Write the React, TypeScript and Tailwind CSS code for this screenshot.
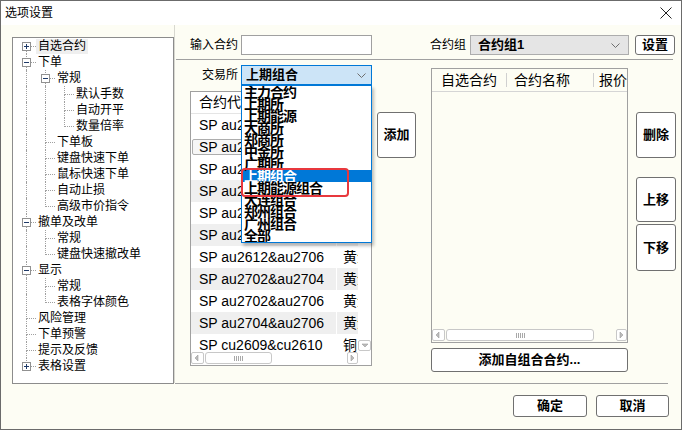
import React from 'react';

type Node = { label: string; children?: Node[]; collapsed?: boolean; selected?: boolean };

const tree: Node[] = [
  { label: '自选合约', collapsed: true, selected: true },
  {
    label: '下单',
    children: [
      { label: '常规', children: [{ label: '默认手数' }, { label: '自动开平' }, { label: '数量倍率' }] },
      { label: '下单板' },
      { label: '键盘快速下单' },
      { label: '鼠标快速下单' },
      { label: '自动止损' },
      { label: '高级市价指令' },
    ],
  },
  { label: '撤单及改单', children: [{ label: '常规' }, { label: '键盘快速撤改单' }] },
  { label: '显示', children: [{ label: '常规' }, { label: '表格字体颜色' }] },
  { label: '风险管理' },
  { label: '下单预警' },
  { label: '提示及反馈' },
  { label: '表格设置', collapsed: true },
];

type Row = { node: Node; guides: boolean[]; first: boolean; last: boolean; expandable: boolean; expanded: boolean };

function flatten(nodes: Node[], guides: boolean[], root: boolean, out: Row[]) {
  nodes.forEach((node, i) => {
    const last = i === nodes.length - 1;
    const expandable = !!node.children || !!node.collapsed;
    out.push({ node, guides, first: root && i === 0, last, expandable, expanded: !!node.children });
    if (node.children) flatten(node.children, [...guides, !last], false, out);
  });
  return out;
}

const rows = flatten(tree, [], true, []);

const exchanges = [
  '主力合约', '上期所', '上期能源', '大商所', '郑商所', '中金所', '广期所',
  '上期组合', '上期能源组合', '大连组合', '郑州组合', '广州组合', '全部',
];

const contracts = [
  ['SP au2606&au2608', '黄金'],
  ['SP au2606&au2610', '黄金'],
  ['SP au2606&au2612', '黄金'],
  ['SP au2608&au2610', '黄金'],
  ['SP au2610&au2612', '黄金'],
  ['SP au2612&au2702', '黄金'],
  ['SP au2612&au2706', '黄金'],
  ['SP au2702&au2704', '黄金'],
  ['SP au2702&au2706', '黄金'],
  ['SP au2704&au2706', '黄金'],
  ['SP cu2609&cu2610', '铜'],
];

function Expander({ open }: { open: boolean }) {
  return (
    <svg className="absolute left-[5px] top-[4px]" width="9" height="9" viewBox="0 0 9 9">
      <rect x="0.5" y="0.5" width="8" height="8" fill="#fff" stroke="#919191" />
      <line x1="2" y1="4.5" x2="7" y2="4.5" stroke="#1f3a68" />
      {!open && <line x1="4.5" y1="2" x2="4.5" y2="7" stroke="#1f3a68" />}
    </svg>
  );
}

function TreeRow({ row }: { row: Row }) {
  return (
    <div className="flex h-[16px]">
      {row.guides.map((g, i) => (
        <div key={i} className="w-[19px] h-[16px] shrink-0">
          {g && <div className="ml-[9px] h-full border-l border-dotted border-[#a0a0a0]" />}
        </div>
      ))}
      <div className="relative w-[19px] h-[16px] shrink-0 flex flex-col">
        <div
          className={`ml-[9px] h-[9px] border-b border-dotted border-[#a0a0a0] ${row.first ? '' : 'border-l'}`}
        />
        <div className={`ml-[9px] h-[7px] border-dotted border-[#a0a0a0] ${row.last ? '' : 'border-l'}`} />
        {row.expandable && <Expander open={row.expanded} />}
      </div>
      <div
        className={`px-[2px] h-[15px] mt-[1px] text-[12px] leading-[15px] whitespace-nowrap ${
          row.node.selected ? 'bg-[#efefef]' : ''
        }`}
      >
        {row.node.label}
      </div>
    </div>
  );
}

function Btn({ children, className }: { children: React.ReactNode; className: string }) {
  return (
    <button
      className={`flex items-center justify-center bg-white border border-[#707070] rounded-[3px] text-[13px] font-bold text-black ${className}`}
    >
      {children}
    </button>
  );
}

function Chevron({ className }: { className?: string }) {
  return (
    <svg className={className} width="9" height="5" viewBox="0 0 9 5">
      <polyline points="0.5,0.5 4.5,4.5 8.5,0.5" fill="none" stroke="#6e6e6e" />
    </svg>
  );
}

function Arrow({ dir }: { dir: 'left' | 'right' | 'down' }) {
  const pts = dir === 'left' ? '5,2 2,5 5,8' : dir === 'right' ? '3,2 6,5 3,8' : '2,3 5,6 8,3';
  return (
    <svg width="9" height="10" viewBox="0 0 9 10">
      <polygon points={pts} fill="#bcbcbc" stroke="#9a9a9a" strokeWidth="0.6" />
    </svg>
  );
}

function HScroll({ thumb }: { thumb: string }) {
  return (
    <div className="flex h-[12px] items-stretch">
      <div className="w-[13px] flex items-center justify-center border border-[#c8c8c8] rounded-[2px] bg-white">
        <Arrow dir="left" />
      </div>
      <div className={`${thumb} ml-[1px] flex items-center justify-center border border-[#c8c8c8] rounded-[3px] bg-white`}>
        <div className="flex gap-[1px]">
          {[0, 1, 2, 3, 4].map((i) => (
            <div key={i} className="w-px h-[5px] bg-[#a8a8a8]" />
          ))}
        </div>
      </div>
      <div className="flex-1" />
      <div className="w-[11px] flex items-center justify-center border border-[#c8c8c8] rounded-[2px] bg-white">
        <Arrow dir="right" />
      </div>
    </div>
  );
}

export default function App() {
  return (
    <div className="w-[682px] h-[430px] border border-[#6b6b6b] bg-[#fdfdf4] flex flex-col text-black font-['Liberation_Sans','Noto_Sans_CJK_SC',sans-serif] overflow-hidden">
      {/* title bar */}
      <div className="h-[24px] shrink-0 bg-white flex items-center justify-between pl-[4px] pr-[9px]">
        <span className="text-[12px]">选项设置</span>
        <svg width="12" height="12" viewBox="0 0 12 12">
          <path d="M0.5 0.5 L11.5 11.5 M11.5 0.5 L0.5 11.5" stroke="#222" strokeWidth="1" />
        </svg>
      </div>

      <div className="flex h-[358px] shrink-0">
        {/* tree */}
        <div className="ml-[11px] mt-[12px] w-[162px] h-[347px] border border-[#8c8c8c] bg-white pl-[4px] shrink-0">
          {rows.map((r, i) => (
            <TreeRow key={i} row={r} />
          ))}
        </div>

        {/* right side */}
        <div className="flex flex-col w-[506px] border-l border-[#d8d8d0]">
          <div className="flex items-center h-[20px] mt-[10px] pl-[15px]">
            <span className="text-[12px] w-[51px]">输入合约</span>
            <div className="w-[131px] h-[20px] border border-[#a0a0a0] bg-white" />
            <span className="text-[12px] ml-[58px] w-[40px]">合约组</span>
            <div className="w-[159px] h-[20px] border border-[#adadad] bg-[#e5e5e5] flex items-center justify-between pl-[7px] pr-[8px]">
              <span className="text-[13px] font-bold">合约组1</span>
              <Chevron />
            </div>
            <Btn className="ml-[6px] w-[40px] h-[20px]">设置</Btn>
          </div>

          <div className="mt-[4px] ml-[1px] w-[497px] h-px bg-[#a0a0a0]" />

          <div className="flex flex-1">
            {/* exchange + contracts */}
            <div className="flex flex-col pl-[15px]">
              <div className="flex items-center mt-[5px] h-[20px]">
                <span className="text-[12px] w-[51px] pl-[12px]">交易所</span>
                <div className="relative w-[131px] h-[20px] border border-[#0078d7] bg-[#cce4f7] flex items-center justify-between pl-[4px] pr-[5px]">
                  <span className="text-[13px] font-bold">上期组合</span>
                  <Chevron />
                  <div className="absolute z-10 left-[-1px] top-[19px] w-[131px] h-[158px] border border-[#0078d7] bg-white shadow-[2px_3px_3px_rgba(0,0,0,0.25)]">
                    <div className="h-full overflow-hidden">
                      {exchanges.map((e) => (
                        <div
                          key={e}
                          className={`h-[12px] leading-[12px] text-[14px] tracking-[-1px] font-bold pl-[2px] whitespace-nowrap ${
                            e === '上期组合' ? 'bg-[#0078d7] text-white' : ''
                          }`}
                        >
                          {e}
                        </div>
                      ))}
                    </div>
                    <div className="absolute left-[-1px] top-[82px] w-[108px] h-[29px] border-2 border-[#e8383d] rounded-[4px]" />
                  </div>
                </div>
              </div>

              <div className="flex mt-[6px]">
                <div className="w-[182px] h-[275px] border border-[#a0a0a0] bg-white flex flex-col">
                  <div className="flex flex-1 overflow-hidden">
                    <div className="w-[167px] flex flex-col">
                      <div className="flex h-[22px] shrink-0 border-b border-[#e5e5e5] text-[14px] leading-[21px]">
                        <div className="w-[145px] pl-[8px]">合约代码</div>
                        <div className="pl-[6px] whitespace-nowrap">合约名称</div>
                      </div>
                      {contracts.map(([code, name], i) => (
                        <div key={code} className="flex h-[22px] shrink-0 text-[14px] leading-[22px]">
                          {i === 1 ? (
                            <div className="w-[145px] px-[1px] py-[3px]">
                              <div className="h-[16px] border border-[#adadad] rounded-[2px] bg-[#f6f6f6] pl-[6px] leading-[14px] whitespace-nowrap overflow-hidden">
                                {code}
                              </div>
                            </div>
                          ) : (
                            <div className={`w-[145px] pl-[8px] whitespace-nowrap ${i % 2 ? 'bg-[#efefef]' : ''}`}>{code}</div>
                          )}
                          <div className={`ml-[1px] flex-1 pl-[6px] whitespace-nowrap overflow-hidden ${i % 2 ? 'bg-[#efefef]' : ''}`}>
                            {name}
                          </div>
                        </div>
                      ))}
                    </div>
                    <div className="w-[13px] flex flex-col justify-end pb-[1px]">
                      <div className="h-[11px] flex items-center justify-center border border-[#c8c8c8] rounded-[2px] bg-white">
                        <Arrow dir="down" />
                      </div>
                    </div>
                  </div>
                  <div className="flex h-[12px] mb-[1px]">
                    <div className="w-[167px]">
                      <HScroll thumb="w-[67px]" />
                    </div>
                  </div>
                </div>
                <Btn className="ml-[5px] mt-[21px] w-[39px] h-[46px]">添加</Btn>
              </div>
            </div>

            {/* selected list */}
            <div className="flex flex-col ml-[15px]">
              <div className="mt-[8px] w-[197px] h-[275px] border border-[#a0a0a0] flex flex-col">
                <div className="flex items-center h-[23px] shrink-0 border-b border-[#d5d5d5] text-[14px]">
                  <div className="w-[74px] pl-[9px]">自选合约</div>
                  <div className="w-px h-[14px] bg-[#d0d0d0]" />
                  <div className="w-[86px] pl-[7px]">合约名称</div>
                  <div className="w-px h-[14px] bg-[#d0d0d0]" />
                  <div className="pl-[5px] whitespace-nowrap overflow-hidden">报价</div>
                </div>
                <div className="flex-1" />
                <div className="mb-[1px]">
                  <HScroll thumb="w-[148px]" />
                </div>
              </div>
              <Btn className="mt-[5px] w-[197px] h-[24px]">添加自组合合约...</Btn>
            </div>

            <div className="flex flex-col ml-[8px] mt-[52px]">
              <Btn className="w-[40px] h-[46px]">删除</Btn>
              <Btn className="mt-[19px] w-[40px] h-[45px]">上移</Btn>
              <Btn className="mt-[2px] w-[40px] h-[47px]">下移</Btn>
            </div>
          </div>
        </div>
      </div>

      <div className="ml-[174px] w-[493px] h-px bg-[#a0a0a0] shrink-0" />

      <div className="flex justify-end gap-[9px] pr-[12px] pt-[11px]">
        <Btn className="w-[74px] h-[22px]">确定</Btn>
        <Btn className="w-[73px] h-[22px]">取消</Btn>
      </div>
    </div>
  );
}
